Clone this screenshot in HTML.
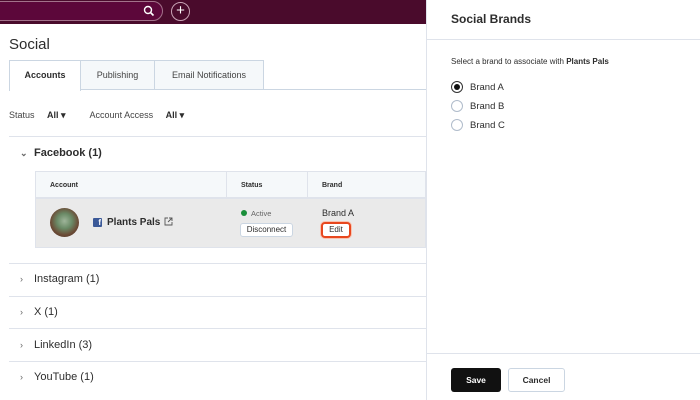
<!DOCTYPE html>
<html><head><style>
*{box-sizing:border-box;margin:0;padding:0}
body{width:700px;height:400px;overflow:hidden;font-family:"Liberation Sans",sans-serif;color:#2d2d2d;background:#fff;position:relative}
.top{position:absolute;left:0;top:0;width:426px;height:24px;background:#4a0b2c}
.search{position:absolute;left:-10px;top:1px;width:173px;height:20px;border:1px solid #a3728b;border-radius:11px;background:#5c073a}
.plus{position:absolute;left:171px;top:2px;width:19px;height:19px;border:1px solid #c9a4b6;border-radius:50%;color:#fff;font-size:15px;line-height:16px;text-align:center}
.abs{position:absolute}
.b{font-weight:bold}
.hr{position:absolute;height:1px;background:#dfe3eb}
.tab{position:absolute;top:60px;height:30px;border:1px solid #cbd6e2;background:#f5f8fa;font-size:9px;text-align:center;line-height:29px;color:#444}
.sec{position:absolute;left:20px;font-size:11px;color:#2d2d2d}
.sec span{display:inline-block;width:14px;color:#666;font-size:9px}
.btn{position:absolute;border:1px solid #cbd6e2;border-radius:3px;background:#fff;font-size:8px;text-align:center;color:#2d2d2d}
.radio{position:absolute;left:451px;width:12px;height:12px;border:1px solid #b0bccb;border-radius:50%}
</style></head><body>
<div class="top"><div class="search"><svg class="abs" style="left:152px;top:3px" width="12" height="12" viewBox="0 0 12 12"><circle cx="5" cy="5" r="3.5" stroke="#fff" stroke-width="1.4" fill="none"/><path d="M7.5 7.5L10.5 10.5" stroke="#fff" stroke-width="1.6"/></svg></div><div class="plus">+</div></div>
<div class="abs" style="left:9px;top:36px;font-size:15px;color:#2d2d2d">Social</div>
<div class="tab" style="left:9px;width:72px;background:#fff;border-bottom:none;font-weight:bold;height:31px;color:#2d2d2d">Accounts</div>
<div class="tab" style="left:80px;width:75px">Publishing</div>
<div class="tab" style="left:154px;width:110px">Email Notifications</div>
<div class="hr" style="left:81px;top:89px;width:345px;background:#cbd6e2"></div>
<div class="abs" style="left:9px;top:110px;font-size:9px;color:#444">Status <b style="margin-left:10px;color:#2d2d2d">All ▾</b><span style="margin-left:24px">Account Access</span> <b style="margin-left:10px;color:#2d2d2d">All ▾</b></div>
<div class="hr" style="left:9px;top:136px;width:417px"></div>
<div class="sec b" style="top:147px"><span>⌄</span>Facebook (1)</div>
<div class="abs" style="left:35px;top:171px;width:391px;height:27px;background:#f5f8fa;border:1px solid #dfe3eb"></div>
<div class="abs" style="left:226px;top:171px;width:1px;height:27px;background:#dfe3eb"></div>
<div class="abs" style="left:307px;top:171px;width:1px;height:27px;background:#dfe3eb"></div>
<div class="abs b" style="left:50px;top:182px;font-size:7px">Account</div>
<div class="abs b" style="left:241px;top:182px;font-size:7px">Status</div>
<div class="abs b" style="left:322px;top:182px;font-size:7px">Brand</div>
<div class="abs" style="left:35px;top:198px;width:391px;height:50px;background:#eaeaea;border:1px solid #dfe3eb"></div>
<div class="abs" style="left:50px;top:208px;width:29px;height:29px;border-radius:50%;background:radial-gradient(circle at 50% 45%,#9fb59a 0,#6a8a66 35%,#6b4a35 65%,#3e3328 100%)"></div>
<div class="abs" style="left:93px;top:218px;width:9px;height:9px;background:#3b5998;border-radius:1px;color:#fff;font-size:8px;line-height:10px;text-align:right;font-weight:bold;padding-right:1px">f</div>
<div class="abs b" style="left:107px;top:217px;font-size:10px">Plants Pals</div>
<svg class="abs" style="left:164px;top:217px" width="9" height="9" viewBox="0 0 9 9"><path d="M4 1H1v7h7V5M5 1h3v3M8 1L4 5" stroke="#555" fill="none" stroke-width="0.9"/></svg>
<div class="abs" style="left:241px;top:210px;width:6px;height:6px;border-radius:50%;background:#1a8f3a"></div>
<div class="abs" style="left:251px;top:209px;font-size:7.5px;color:#666">Active</div>
<div class="btn" style="left:240px;top:223px;width:53px;height:14px;line-height:12px">Disconnect</div>
<div class="abs" style="left:322px;top:208px;font-size:9px">Brand A</div>
<div class="btn" style="left:321px;top:222px;width:30px;height:16px;line-height:12px;border:2px solid #e8471e;border-radius:4px;box-shadow:0 0 0 1px #f8c2b0">Edit</div>
<div class="hr" style="left:9px;top:263px;width:417px"></div>
<div class="sec" style="top:273px"><span>›</span>Instagram (1)</div>
<div class="hr" style="left:9px;top:296px;width:417px"></div>
<div class="sec" style="top:306px"><span>›</span>X (1)</div>
<div class="hr" style="left:9px;top:328px;width:417px"></div>
<div class="sec" style="top:339px"><span>›</span>LinkedIn (3)</div>
<div class="hr" style="left:9px;top:361px;width:417px"></div>
<div class="sec" style="top:371px"><span>›</span>YouTube (1)</div>
<div class="abs" style="left:426px;top:0;width:274px;height:400px;border-left:1px solid #dfe3eb;background:#fff"></div>
<div class="abs b" style="left:451px;top:12px;font-size:12px;color:#2d2d2d">Social Brands</div>
<div class="hr" style="left:427px;top:39px;width:273px"></div>
<div class="abs" style="left:451px;top:57px;font-size:8px;color:#2d2d2d">Select a brand to associate with <b>Plants Pals</b></div>
<div class="radio" style="top:81px;border-color:#333"><div style="margin:2px;width:6px;height:6px;border-radius:50%;background:#111"></div></div>
<div class="abs" style="left:470px;top:82px;font-size:9.5px">Brand A</div>
<div class="radio" style="top:100px"></div>
<div class="abs" style="left:470px;top:101px;font-size:9.5px">Brand B</div>
<div class="radio" style="top:119px"></div>
<div class="abs" style="left:470px;top:120px;font-size:9.5px">Brand C</div>
<div class="hr" style="left:427px;top:353px;width:273px"></div>
<div class="abs b" style="left:451px;top:368px;width:50px;height:24px;background:#111;border-radius:3px;color:#fff;font-size:8.5px;text-align:center;line-height:24px">Save</div>
<div class="btn b" style="left:508px;top:368px;width:57px;height:24px;line-height:22px;font-size:8.5px;color:#2d2d2d">Cancel</div>
</body></html>
